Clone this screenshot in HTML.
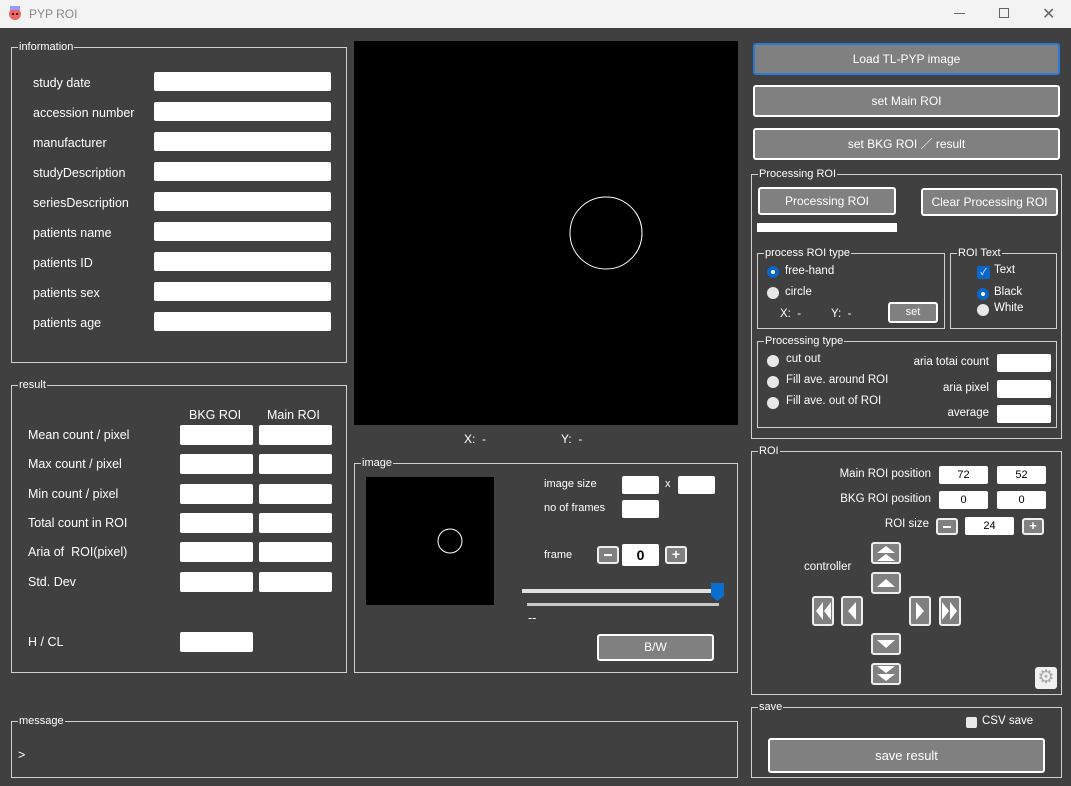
<!DOCTYPE html>
<html><head><meta charset="utf-8"><style>
*{box-sizing:border-box;margin:0;padding:0}
body{width:1071px;height:786px;background:#404040;font-family:"Liberation Sans","Noto Sans CJK JP",sans-serif;font-size:12px;color:#fff;position:relative;overflow:hidden}
.a{position:absolute}
.box{position:absolute;border:1px solid #d0d0d0}
.lg{position:absolute;top:-8px;left:6px;background:#404040;padding:0 1px;font-size:11px;line-height:14px}
.in{position:absolute;background:#fff;border-radius:2px;color:#000;text-align:center;font-size:11px}
.btn{position:absolute;background:#808080;border:2px solid #fff;border-radius:3px;color:#fff;text-align:center;font-size:12px}
.lb{position:absolute;font-size:12.5px;white-space:nowrap}
.rad{position:absolute;width:12px;height:12px;border-radius:50%;background:#e8e8e8}
.rad.on{background:#0a66c8}
.rad.on::after{content:"";position:absolute;left:4px;top:4px;width:4px;height:4px;border-radius:50%;background:#fff}
.sb{position:absolute;background:#808080;border:2px solid #eee;border-radius:3px}
</style></head><body>
<!-- title bar -->
<div class="a" style="left:0;top:0;width:1071px;height:28px;background:#f3f3f3"></div>
<svg class="a" style="left:7px;top:5px" width="16" height="16"><circle cx="8" cy="9" r="6" fill="#e66"/><rect x="3" y="1" width="10" height="4" fill="#99f"/><circle cx="6" cy="9" r="1" fill="#000"/><circle cx="10" cy="9" r="1" fill="#000"/></svg>
<div class="a" style="left:29px;top:7px;color:#888;font-size:12px">PYP ROI</div>
<div class="a" style="left:954px;top:13px;width:11px;height:1px;background:#666"></div>
<div class="a" style="left:999px;top:8px;width:10px;height:10px;border:1px solid #666"></div>
<div class="a" style="left:1042px;top:4px;color:#666;font-size:16px">✕</div>

<!-- information -->
<div class="box" style="left:11px;top:47px;width:336px;height:316px"><div class="lg">information</div></div>
<div class="lb" style="left:33px;top:76px">study date</div>
<div class="lb" style="left:33px;top:106px">accession number</div>
<div class="lb" style="left:33px;top:136px">manufacturer</div>
<div class="lb" style="left:33px;top:166px">studyDescription</div>
<div class="lb" style="left:33px;top:196px">seriesDescription</div>
<div class="lb" style="left:33px;top:226px">patients name</div>
<div class="lb" style="left:33px;top:256px">patients ID</div>
<div class="lb" style="left:33px;top:286px">patients sex</div>
<div class="lb" style="left:33px;top:316px">patients age</div>
<div class="in" style="left:154px;top:72px;width:177px;height:19px"></div>
<div class="in" style="left:154px;top:102px;width:177px;height:19px"></div>
<div class="in" style="left:154px;top:132px;width:177px;height:19px"></div>
<div class="in" style="left:154px;top:162px;width:177px;height:19px"></div>
<div class="in" style="left:154px;top:192px;width:177px;height:19px"></div>
<div class="in" style="left:154px;top:222px;width:177px;height:19px"></div>
<div class="in" style="left:154px;top:252px;width:177px;height:19px"></div>
<div class="in" style="left:154px;top:282px;width:177px;height:19px"></div>
<div class="in" style="left:154px;top:312px;width:177px;height:19px"></div>

<!-- result -->
<div class="box" style="left:11px;top:385px;width:336px;height:288px"><div class="lg">result</div></div>
<div class="lb" style="left:189px;top:408px">BKG ROI</div>
<div class="lb" style="left:267px;top:408px">Main ROI</div>
<div class="lb" style="left:28px;top:428px">Mean count / pixel</div>
<div class="lb" style="left:28px;top:457px">Max count / pixel</div>
<div class="lb" style="left:28px;top:487px">Min count / pixel</div>
<div class="lb" style="left:28px;top:516px">Total count in ROI</div>
<div class="lb" style="left:28px;top:545px">Aria of &nbsp;ROI(pixel)</div>
<div class="lb" style="left:28px;top:575px">Std. Dev</div>
<div class="lb" style="left:28px;top:635px">H / CL</div>
<div class="in" style="left:180px;top:425px;width:73px;height:20px"></div><div class="in" style="left:259px;top:425px;width:73px;height:20px"></div>
<div class="in" style="left:180px;top:454px;width:73px;height:20px"></div><div class="in" style="left:259px;top:454px;width:73px;height:20px"></div>
<div class="in" style="left:180px;top:484px;width:73px;height:20px"></div><div class="in" style="left:259px;top:484px;width:73px;height:20px"></div>
<div class="in" style="left:180px;top:513px;width:73px;height:20px"></div><div class="in" style="left:259px;top:513px;width:73px;height:20px"></div>
<div class="in" style="left:180px;top:542px;width:73px;height:20px"></div><div class="in" style="left:259px;top:542px;width:73px;height:20px"></div>
<div class="in" style="left:180px;top:572px;width:73px;height:20px"></div><div class="in" style="left:259px;top:572px;width:73px;height:20px"></div>
<div class="in" style="left:180px;top:632px;width:73px;height:20px"></div>

<!-- message -->
<div class="box" style="left:11px;top:721px;width:727px;height:57px"><div class="lg">message</div></div>
<div class="lb" style="left:18px;top:748px">&gt;</div>

<!-- main image -->
<div class="a" style="left:354px;top:41px;width:384px;height:384px;background:#000"></div>
<svg class="a" style="left:354px;top:41px" width="384" height="384"><circle cx="252" cy="192" r="36" fill="none" stroke="#fff" stroke-width="1"/></svg>
<div class="lb" style="left:464px;top:432px;font-size:12px">X: &nbsp;-</div>
<div class="lb" style="left:561px;top:432px;font-size:12px">Y: &nbsp;-</div>

<!-- image box -->
<div class="box" style="left:354px;top:463px;width:384px;height:210px"><div class="lg">image</div></div>
<div class="a" style="left:366px;top:477px;width:128px;height:128px;background:#000"></div>
<svg class="a" style="left:366px;top:477px" width="128" height="128"><circle cx="84" cy="64" r="12" fill="none" stroke="#fff"/></svg>
<div class="lb" style="left:544px;top:478px;font-size:11px">image size</div>
<div class="lb" style="left:544px;top:502px;font-size:11px">no of frames</div>
<div class="lb" style="left:544px;top:549px;font-size:11px">frame</div>
<div class="lb" style="left:665px;top:478px;font-size:11px">x</div>
<div class="in" style="left:622px;top:476px;width:37px;height:18px"></div>
<div class="in" style="left:678px;top:476px;width:37px;height:18px"></div>
<div class="in" style="left:622px;top:500px;width:37px;height:18px"></div>
<div class="sb" style="left:597px;top:546px;width:22px;height:18px"><div class="a" style="left:5px;top:6px;width:8px;height:2px;background:#fff"></div></div>
<div class="in" style="left:622px;top:544px;width:37px;height:22px;font-size:14px;font-weight:bold;line-height:22px">0</div>
<div class="sb" style="left:665px;top:546px;width:22px;height:18px;color:#fff;text-align:center;font-size:14px;line-height:13px;font-weight:bold">+</div>
<div class="a" style="left:522px;top:589px;width:194px;height:4px;background:#e0e0e0"></div>
<svg class="a" style="left:711px;top:583px" width="13" height="18"><path d="M0 0H13V13L6.5 18L0 13Z" fill="#0a6ed0"/></svg>
<div class="a" style="left:527px;top:603px;width:192px;height:3px;background:#c8c8c8"></div>
<div class="lb" style="left:528px;top:611px">--</div>
<div class="btn" style="left:597px;top:634px;width:117px;height:27px;line-height:23px">B/W</div>

<!-- right buttons -->
<div class="btn" style="left:753px;top:43px;width:307px;height:32px;line-height:28px;border-color:#2a7ad8">Load TL-PYP image</div>
<div class="btn" style="left:753px;top:85px;width:307px;height:32px;line-height:28px">set Main ROI</div>
<div class="btn" style="left:753px;top:128px;width:307px;height:32px;line-height:28px">set BKG ROI ／ result</div>

<!-- Processing ROI -->
<div class="box" style="left:751px;top:174px;width:311px;height:265px"><div class="lg">Processing ROI</div></div>
<div class="btn" style="left:758px;top:187px;width:138px;height:28px;line-height:24px">Processing ROI</div>
<div class="btn" style="left:921px;top:188px;width:137px;height:28px;line-height:24px">Clear Processing ROI</div>
<div class="a" style="left:757px;top:223px;width:140px;height:9px;background:#fff"></div>
<div class="box" style="left:757px;top:253px;width:188px;height:76px"><div class="lg">process ROI type</div></div>
<div class="rad on" style="left:767px;top:266px"></div><div class="lb" style="left:785px;top:265px;font-size:11.5px">free-hand</div>
<div class="rad" style="left:767px;top:287px"></div><div class="lb" style="left:785px;top:286px;font-size:11.5px">circle</div>
<div class="lb" style="left:780px;top:308px;font-size:11.5px">X: &nbsp;-</div>
<div class="lb" style="left:831px;top:308px;font-size:11.5px">Y: &nbsp;-</div>
<div class="btn" style="left:888px;top:302px;width:50px;height:21px;line-height:17px;font-size:11px">set</div>
<div class="box" style="left:950px;top:253px;width:107px;height:76px"><div class="lg">ROI Text</div></div>
<div class="a" style="left:977px;top:266px;width:13px;height:13px;background:#0a66c8;border-radius:2px;font-size:9px;text-align:center;line-height:13px">✓</div>
<div class="lb" style="left:994px;top:264px;font-size:11.5px">Text</div>
<div class="rad on" style="left:977px;top:288px"></div><div class="lb" style="left:994px;top:286px;font-size:11.5px">Black</div>
<div class="rad" style="left:977px;top:304px"></div><div class="lb" style="left:994px;top:302px;font-size:11.5px">White</div>
<div class="box" style="left:757px;top:341px;width:300px;height:87px"><div class="lg">Processing type</div></div>
<div class="rad" style="left:767px;top:355px"></div><div class="lb" style="left:786px;top:353px;font-size:11.5px">cut out</div>
<div class="rad" style="left:767px;top:376px"></div><div class="lb" style="left:786px;top:374px;font-size:11.5px">Fill ave. around ROI</div>
<div class="rad" style="left:767px;top:397px"></div><div class="lb" style="left:786px;top:395px;font-size:11.5px">Fill ave. out of ROI</div>
<div class="lb" style="right:82px;top:356px;font-size:11.5px">aria totai count</div>
<div class="lb" style="right:82px;top:382px;font-size:11.5px">aria pixel</div>
<div class="lb" style="right:82px;top:407px;font-size:11.5px">average</div>
<div class="in" style="left:997px;top:354px;width:54px;height:18px"></div>
<div class="in" style="left:997px;top:380px;width:54px;height:18px"></div>
<div class="in" style="left:997px;top:405px;width:54px;height:18px"></div>

<!-- ROI -->
<div class="box" style="left:751px;top:451px;width:311px;height:244px"><div class="lg">ROI</div></div>
<div class="lb" style="right:140px;top:468px;font-size:11.5px">Main ROI position</div>
<div class="lb" style="right:140px;top:493px;font-size:11.5px">BKG ROI position</div>
<div class="lb" style="right:142px;top:518px;font-size:11.5px">ROI size</div>
<div class="in" style="left:939px;top:466px;width:49px;height:18px;line-height:18px">72</div>
<div class="in" style="left:997px;top:466px;width:49px;height:18px;line-height:18px">52</div>
<div class="in" style="left:939px;top:491px;width:49px;height:18px;line-height:18px">0</div>
<div class="in" style="left:997px;top:491px;width:49px;height:18px;line-height:18px">0</div>
<div class="sb" style="left:936px;top:518px;width:22px;height:17px"><div class="a" style="left:5px;top:6px;width:8px;height:2px;background:#fff"></div></div>
<div class="in" style="left:965px;top:517px;width:49px;height:18px;line-height:18px">24</div>
<div class="sb" style="left:1022px;top:518px;width:22px;height:17px;color:#fff;text-align:center;font-size:13px;line-height:12px;font-weight:bold">+</div>
<div class="lb" style="left:804px;top:561px;font-size:11.5px">controller</div>
<!-- arrows -->
<div class="sb" style="left:871px;top:542px;width:30px;height:22px"><svg width="26" height="18"><path d="M4 9L13 2L22 9ZM4 17L13 10L22 17Z" fill="#fff"/></svg></div>
<div class="sb" style="left:871px;top:572px;width:30px;height:22px"><svg width="26" height="18"><path d="M4 13L13 5L22 13Z" fill="#fff"/></svg></div>
<div class="sb" style="left:871px;top:633px;width:30px;height:22px"><svg width="26" height="18"><path d="M4 5L13 13L22 5Z" fill="#fff"/></svg></div>
<div class="sb" style="left:871px;top:663px;width:30px;height:22px"><svg width="26" height="18"><path d="M4 1L13 8L22 1ZM4 9L13 16L22 9Z" fill="#fff"/></svg></div>
<div class="sb" style="left:812px;top:596px;width:22px;height:30px"><svg width="18" height="26"><path d="M9 4L2 13L9 22ZM17 4L10 13L17 22Z" fill="#fff"/></svg></div>
<div class="sb" style="left:841px;top:596px;width:22px;height:30px"><svg width="18" height="26"><path d="M13 4L5 13L13 22Z" fill="#fff"/></svg></div>
<div class="sb" style="left:909px;top:596px;width:22px;height:30px"><svg width="18" height="26"><path d="M5 4L13 13L5 22Z" fill="#fff"/></svg></div>
<div class="sb" style="left:939px;top:596px;width:22px;height:30px"><svg width="18" height="26"><path d="M1 4L8 13L1 22ZM9 4L16 13L9 22Z" fill="#fff"/></svg></div>
<div class="a" style="left:1035px;top:667px;width:22px;height:22px;background:#f0f0f0;border-radius:3px;color:#aaa;font-size:19px;text-align:center;line-height:22px">⚙</div>

<!-- save -->
<div class="box" style="left:751px;top:707px;width:311px;height:71px"><div class="lg">save</div></div>
<div class="a" style="left:966px;top:717px;width:11px;height:11px;background:#e8e8e8;border-radius:2px"></div>
<div class="lb" style="left:982px;top:715px;font-size:11.5px">CSV save</div>
<div class="btn" style="left:768px;top:738px;width:277px;height:35px;line-height:31px;font-size:13px">save result</div>
</body></html>
